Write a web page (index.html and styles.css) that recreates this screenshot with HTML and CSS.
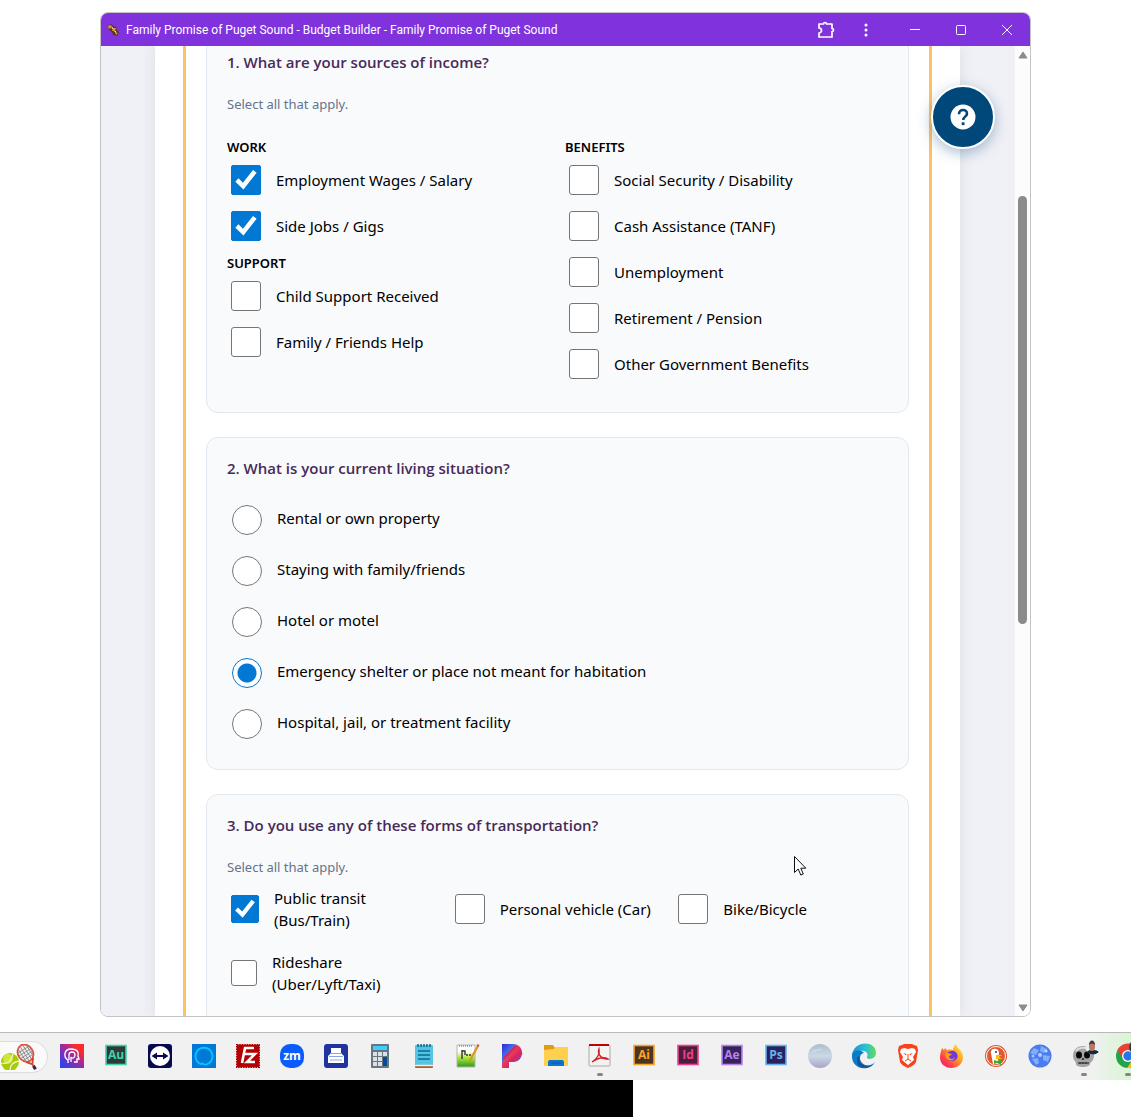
FILE: index.html
```html
<!DOCTYPE html>
<html lang="en">
<head>
    <meta charset="UTF-8">
    <meta name="viewport" content="width=device-width, initial-scale=1.0">
    <title>Family Promise of Puget Sound - Budget Builder</title>
    <link rel="stylesheet" href="styles.css">
</head>
<body>

    <div class="window">
        <header class="titlebar">
            <svg class="favicon" width="12" height="12" viewBox="0 0 12 12"><path d="M1 2 4 0l2 2 3 1 1 3 2 3-2 3-4-1-1-3-3-2z" fill="#5b3420"/><path d="M1 2l3-1 1 2-3 2zM6 4l3 0-1 3-3 0zM8 8l3 1-2 2z" fill="#d89b35"/><path d="M4 4l2-1 0 2zM7 7l2 0 0 2z" fill="#fff0b0"/></svg>
            <span class="window-title">Family Promise of Puget Sound - Budget Builder - Family Promise of Puget Sound</span>
            <button class="title-btn ext-btn" aria-label="Extensions">
                <svg width="18" height="18" viewBox="0 0 18 18" fill="none" stroke="#fff" stroke-width="1.700" stroke-linejoin="round"><path d="M2 3h4.500a1.500 1.500 0 0 1 3 0H15v4.500a1.500 1.500 0 0 1 0 3V16H2v-4a2.500 2.500 0 0 0 0-5z"/></svg>
            </button>
            <button class="title-btn menu-btn" aria-label="Menu">
                <svg width="4" height="14" viewBox="0 0 4 14" fill="#fff"><circle cx="2" cy="2" r="1.500"/><circle cx="2" cy="7" r="1.500"/><circle cx="2" cy="12" r="1.500"/></svg>
            </button>
            <button class="title-btn" aria-label="Minimize">
                <svg width="10" height="10" viewBox="0 0 10 10" stroke="#fff"><path d="M0 4.500h10"/></svg>
            </button>
            <button class="title-btn" aria-label="Maximize">
                <svg width="10" height="10" viewBox="0 0 10 10" stroke="#fff" fill="none"><rect x=".5" y=".5" width="9" height="9" rx="1"/></svg>
            </button>
            <button class="title-btn" aria-label="Close">
                <svg width="10" height="10" viewBox="0 0 10 10" stroke="#fff"><path d="M0 0l10 10M10 0L0 10"/></svg>
            </button>
        </header>

        <div class="viewport">
            <main class="page">
                <form class="form">

                    <!-- Income -->
                    <section class="card">
                        <h2>1. What are your sources of income?</h2>
                        <p class="hint">Select all that apply.</p>
                        <div class="two-col">
                            <div>
                                <h3>WORK</h3>
                                <label class="check"><input type="checkbox" checked> Employment Wages / Salary</label>
                                <label class="check"><input type="checkbox" checked> Side Jobs / Gigs</label>
                                <h3>SUPPORT</h3>
                                <label class="check"><input type="checkbox"> Child Support Received</label>
                                <label class="check"><input type="checkbox"> Family / Friends Help</label>
                            </div>
                            <div>
                                <h3>BENEFITS</h3>
                                <label class="check"><input type="checkbox"> Social Security / Disability</label>
                                <label class="check"><input type="checkbox"> Cash Assistance (TANF)</label>
                                <label class="check"><input type="checkbox"> Unemployment</label>
                                <label class="check"><input type="checkbox"> Retirement / Pension</label>
                                <label class="check"><input type="checkbox"> Other Government Benefits</label>
                            </div>
                        </div>
                    </section>

                    <!-- Living situation -->
                    <section class="card">
                        <h2>2. What is your current living situation?</h2>
                        <label class="radio"><input type="radio" name="living"> <span>Rental or own property</span></label>
                        <label class="radio"><input type="radio" name="living"> <span>Staying with family/friends</span></label>
                        <label class="radio"><input type="radio" name="living"> <span>Hotel or motel</span></label>
                        <label class="radio"><input type="radio" name="living" checked> <span>Emergency shelter or place not meant for habitation</span></label>
                        <label class="radio"><input type="radio" name="living"> <span>Hospital, jail, or treatment facility</span></label>
                    </section>

                    <!-- Transportation -->
                    <section class="card last">
                        <h2>3. Do you use any of these forms of transportation?</h2>
                        <p class="hint">Select all that apply.</p>
                        <div class="three-col">
                            <label class="check"><input type="checkbox" class="medium" checked> <span>Public transit<br>(Bus/Train)</span></label>
                            <label class="check"><input type="checkbox"> <span>Personal vehicle (Car)</span></label>
                            <label class="check"><input type="checkbox"> <span>Bike/Bicycle</span></label>
                            <label class="check"><input type="checkbox" class="small"> <span>Rideshare<br>(Uber/Lyft/Taxi)</span></label>
                        </div>
                    </section>

                </form>
            </main>

            <div class="scrollbar">
                <svg width="10" height="8" viewBox="0 0 10 8"><path d="M5 1 9 7H1z" fill="#8b8b8b" stroke="#8b8b8b" stroke-linejoin="round"/></svg>
                <div class="track"><div class="thumb"></div></div>
                <svg width="10" height="8" viewBox="0 0 10 8"><path d="M5 7 9 1H1z" fill="#8b8b8b" stroke="#8b8b8b" stroke-linejoin="round"/></svg>
            </div>
        </div>

        <button class="help" aria-label="Help">
            <svg width="26" height="26" viewBox="0 0 26 26"><circle cx="13" cy="13" r="12.500" fill="#fff"/><path d="M9 10.200C9 7.500 10.700 6 13 6s4 1.500 4 3.700c0 2.800-3.800 3.100-3.800 6.300" fill="none" stroke="#00477a" stroke-width="2.600"/><rect x="11.700" y="18.300" width="2.800" height="2.800" fill="#00477a"/></svg>
        </button>
    </div>

    <svg class="cursor" width="13" height="20" viewBox="0 0 13 20"><path d="M.5.5v16l3.700-3.500 2.600 6 2.500-1-2.500-5.800h5z" fill="#fff" stroke="#101018"/></svg>

    <footer class="taskbar">
        <button class="widget" aria-label="Tennis">
            <svg width="38" height="26" viewBox="0 0 38 26"><g transform="rotate(-32 26 10)"><ellipse cx="26" cy="9" rx="7.500" ry="9" fill="#eee" stroke="#e2523c" stroke-width="1.800"/><path d="M20 5h12M19 8h14M19 11h14M20 14h12M22 2v14M25 1v17M28 1v17M31 4v10" stroke="#777" stroke-width=".7"/><path d="M22 17l4 5 4-5M26 21v6" stroke="#d9432f" stroke-width="1.800" fill="none"/><path d="M26 24v4" stroke="#43263a" stroke-width="3"/></g><circle cx="10" cy="18" r="9" fill="#a9c90d"/><circle cx="8" cy="15" r="5" fill="#cfe63c"/><path d="M1 19c7 2 10-2 12-9M10 26c0-5 3-8 9-9" fill="none" stroke="#f2f7c4" stroke-width="1.300"/></svg>
        </button>

        <div class="apps">
            <button class="app" aria-label="Assistant">
                <svg viewBox="0 0 24 24"><defs><linearGradient id="g1" x1="0" y1="1" x2="1" y2="0"><stop offset="0" stop-color="#1746ff"/><stop offset=".55" stop-color="#a52a96"/><stop offset=".8" stop-color="#ff2a2a"/></linearGradient></defs><path d="M0 0h24v24H0z" fill="url(#g1)"/><path d="M8 19v-3C3 13 4 5 11 5c7 0 8 4 7 7l1 3h-2v3h-3" fill="none" stroke="#fff" stroke-width="1.400"/><path d="M9 16V11c0-4 6-4 6 0 0 3-3 4-4 2v5" fill="none" stroke="#fff" stroke-width="1.300"/></svg>
            </button>
            <button class="app" aria-label="Audition">
                <svg viewBox="0 0 24 24"><rect x="2" y="1.500" width="20" height="19" fill="#2b3b3b" stroke="#43d3a5" stroke-width="1.600"/><text x="12" y="15" class="adobe" fill="#43d3a5">Au</text></svg>
            </button>
            <button class="app" aria-label="TeamViewer">
                <svg viewBox="0 0 24 24"><rect width="24" height="24" rx="3" fill="#08094f"/><circle cx="12" cy="12" r="10" fill="#fff"/><path d="M3.500 12 9 8.500V11h6V8.500l5.500 3.500-5.500 3.500V13H9v2.500z" fill="#08094f"/></svg>
            </button>
            <button class="app" aria-label="Alexa">
                <svg viewBox="0 0 24 24"><path d="M0 0h24v24H0z" fill="#0078d7"/><path d="M10 20.500a8.500 8.500 0 1 1 4 0c-2 .3-3 .2-4-2" fill="none" stroke="#00caff" stroke-width="1.800"/></svg>
            </button>
            <button class="app" aria-label="FileZilla">
                <svg viewBox="0 0 24 24"><rect x=".7" y=".7" width="22.600" height="22.600" fill="#b30000" stroke="#b30000" stroke-width="1.400" stroke-dasharray="1.500 1"/><path d="M6 19 9 4h9M7.500 10H15M12 10h7l-8 8h8" fill="none" stroke="#fff" stroke-width="2.600"/></svg>
            </button>
            <button class="app" aria-label="Zoom">
                <svg viewBox="0 0 24 24"><rect width="24" height="24" rx="10" fill="#0b5cff"/><text x="12" y="15.500" class="adobe" fill="#fff">zm</text></svg>
            </button>
            <button class="app" aria-label="Scanner">
                <svg viewBox="0 0 24 24"><rect width="24" height="24" rx="3" fill="#20349f"/><path d="M7 4h10v5l3 3v7H4v-7l3-3z" fill="#fff"/><path d="M7 9.500h10M5 12.500h14M6 16h12" stroke="#8fa4e8"/></svg>
            </button>
            <button class="app" aria-label="Calculator">
                <svg viewBox="0 0 24 24"><rect x="3" width="18" height="24" rx="1" fill="#687582"/><path d="M5 2h14v4H5z" fill="#42cdf8"/><path d="M5 8h4v4H5zM10 8h4v4h-4zM15 8h4v4h-4zM5 13h4v4H5zM10 13h4v4h-4zM5 18h4v4H5zM10 18h4v4h-4z" fill="#dbe2e7"/><path d="M15 13h4v9h-4z" fill="#064b91"/></svg>
            </button>
            <button class="app" aria-label="Notepad">
                <svg viewBox="0 0 24 24"><rect x="3" y="19" width="18" height="5" rx="1" fill="#b75a13"/><rect x="3" y="1" width="18" height="20" rx="1" fill="#55c3e3"/><path d="M3 21.500h18" stroke="#eee" stroke-width="1.500"/><path d="M6 0v3M9 0v3M12 0v3M15 0v3M18 0v3M6 7h12M6 11h12M6 15h12" stroke="#08698c" stroke-width="1.500"/></svg>
            </button>
            <button class="app" aria-label="Notepad++">
                <svg viewBox="0 0 24 24"><defs><linearGradient id="g2" x2="0" y2="1"><stop offset=".3" stop-color="#fff"/><stop offset=".55" stop-color="#b3ed3d"/><stop offset="1" stop-color="#2b9a17"/></linearGradient></defs><path d="M1 1h18v22H1z" fill="url(#g2)" stroke="#b4b4b4"/><path d="M3 2h14" stroke="#555" stroke-dasharray="1 1"/><path d="M6 6v9M6 7h3v4M10 11h2M13 11h2" stroke="#333" stroke-width="1.400" fill="none"/><path d="M13 18 22 2" stroke="#dc9821" stroke-width="2.200"/><path d="M21.500 2.500l1-2" stroke="#d55241" stroke-width="2.200"/></svg>
            </button>
            <button class="app" aria-label="Pandora">
                <svg viewBox="0 0 24 24"><defs><linearGradient id="g3" x2="1" y2="1"><stop offset="0" stop-color="#3524d4"/><stop offset=".35" stop-color="#3c78ef"/><stop offset=".45" stop-color="#f3354e"/><stop offset=".6" stop-color="#d6296c"/><stop offset="1" stop-color="#4a4ef0"/></linearGradient></defs><path d="M2 0h11c12 0 12 18 0 18H9v6H2z" fill="url(#g3)"/><path d="M3 15 16 2M9 17l13-8" stroke="#d92557" stroke-width="2"/></svg>
            </button>
            <button class="app" aria-label="File Explorer">
                <svg viewBox="0 0 24 24"><path d="M0 1h9l2 3v3H0z" fill="#df9b13"/><path d="M0 6 10 5l1-2h13v19H0z" fill="#ffd04f"/><path d="M4 22v-4q0-2 2-2h12q2 0 2 2v4z" fill="#0876d1"/><path d="M7 19h10" stroke="#0b549e"/></svg>
            </button>
            <button class="app running" aria-label="Acrobat">
                <svg viewBox="0 0 24 24"><rect x="1" y="1" width="21" height="21" rx="1" fill="#f2f2f2" stroke="#aaa"/><path d="M1 1h20" stroke="#c30000" stroke-width="2"/><path d="M4 18c6-4 8-8 7-13-2 5 3 11 9 10-5-3-10-1-16 3z" fill="none" stroke="#d51c22" stroke-width="1.400"/></svg>
            </button>
            <button class="app" aria-label="Illustrator">
                <svg viewBox="0 0 24 24"><rect x="2" y="1.500" width="20" height="19" fill="#4b351f" stroke="#fba428" stroke-width="1.600"/><text x="12" y="15" class="adobe" fill="#fba428">Ai</text></svg>
            </button>
            <button class="app" aria-label="InDesign">
                <svg viewBox="0 0 24 24"><rect x="2" y="1.500" width="20" height="19" fill="#4a2039" stroke="#ef3d95" stroke-width="1.600"/><text x="12" y="15" class="adobe" fill="#ef3d95">Id</text></svg>
            </button>
            <button class="app" aria-label="After Effects">
                <svg viewBox="0 0 24 24"><rect x="2" y="1.500" width="20" height="19" fill="#332459" stroke="#ba80ee" stroke-width="1.600"/><text x="12" y="15" class="adobe" fill="#ba80ee">Ae</text></svg>
            </button>
            <button class="app" aria-label="Photoshop">
                <svg viewBox="0 0 24 24"><rect x="2" y="1.500" width="20" height="19" fill="#28235e" stroke="#67b1ed" stroke-width="1.600"/><text x="12" y="15" class="adobe" fill="#67b1ed">Ps</text></svg>
            </button>
            <button class="app" aria-label="Sphere">
                <svg viewBox="0 0 24 24"><defs><linearGradient id="g4" x2="0" y2="1"><stop offset="0" stop-color="#aebdce"/><stop offset=".5" stop-color="#cbd9e6"/><stop offset="1" stop-color="#a6a5c8"/></linearGradient></defs><circle cx="12" cy="12" r="12" fill="url(#g4)"/><path d="M5 8c3-3 6-1 9-3" stroke="#dbe5ee" stroke-width="2" fill="none" opacity=".5"/></svg>
            </button>
            <button class="app" aria-label="Edge">
                <svg viewBox="0 0 24 24"><defs><linearGradient id="g5"><stop offset="0" stop-color="#168ed9"/><stop offset=".6" stop-color="#2fc3d0"/><stop offset="1" stop-color="#65dc4d"/></linearGradient></defs><path d="M0 12C1-4 24-4 24 9c0 7-10 7-9 4 2-4-2-7-7-6-4 0-7 2-8 5z" fill="url(#g5)"/><path d="M0 11c1-5 9-6 12-2-5 0-6 9 1 12 4 1 7 0 10-3C16 29-1 25 0 11z" fill="#0c7bc7"/><path d="M8 12c-3 7 5 13 14 8-7 7-18 4-17-4 0-3 2-4 3-4z" fill="#11539d"/></svg>
            </button>
            <button class="app" aria-label="Brave">
                <svg viewBox="0 0 24 24"><path d="m6 1 2-1h8l2 1 3 1 1 4-2 12q-1 3-8 6-7-3-8-6L2 6l1-4z" fill="#fb421b"/><path d="m5 5 3-1 4 1 4-1 3 1 1 3-3 5 1 3-6 5-6-5 1-3-3-5z" fill="#fff"/><path d="m7 9 3.500 1-.5 1.500zM17 9l-3.500 1 .5 1.500z" fill="#fb421b"/><path d="M12 10v5l-3 2M12 15l3 2" stroke="#fb421b" fill="none"/></svg>
            </button>
            <button class="app" aria-label="Firefox">
                <svg viewBox="0 0 24 24"><defs><linearGradient id="g6" x1="1" x2="0" y2="1"><stop offset="0" stop-color="#fff44f"/><stop offset=".45" stop-color="#ff9420"/><stop offset=".75" stop-color="#ff3750"/><stop offset="1" stop-color="#e81c8a"/></linearGradient></defs><path d="M2 4l2 2 1-2 2 2c3-1 5 0 6 0 0-3 2-5 3-6 0 4 7 6 7 13 0 14-22 15-23 1 0-4 1-7 2-10z" fill="url(#g6)"/><path d="M7 9c2-1 4-3 7-2 6 3 4 10-2 10-3 0-6-2-6-5l3-1z" fill="#7139dc"/><path d="M5 10c3-2 4 0 7 0-1 2-3 1-3 3 1 3 5 2 6 0-1 5-9 5-10-3z" fill="#ff9a1f"/></svg>
            </button>
            <button class="app" aria-label="DuckDuckGo">
                <svg viewBox="0 0 24 24"><circle cx="12" cy="12" r="11" fill="#de5833"/><circle cx="12" cy="12" r="9.500" fill="none" stroke="#fff"/><path d="M9 20 7 9c-1-5 8-6 8 0l-1 6 1 5z" fill="#fff"/><path d="M12 11h6l-3 2 3 2h-6z" fill="#fdbd19"/><path d="m10 16 3 1 4-1v5l-4-2-3 1z" fill="#45a928"/><circle cx="12" cy="8" r="1" fill="#263b76"/></svg>
            </button>
            <button class="app" aria-label="Globe">
                <svg viewBox="0 0 24 24"><circle cx="12" cy="12" r="11.500" fill="#4a7cf0"/><path d="M2 9 6 4l5 2-3 5zM13 2l6 3-3 4-4-2zM15 11l7 1-2 6-5-2zM4 15l6-1 1 5-3 2z" fill="#83adfa"/><circle cx="12" cy="11" r="2" fill="#b5cffc"/><circle cx="18" cy="7" r="1.500" fill="#c3d9ff"/><circle cx="5" cy="12" r="1.500" fill="#a5c5ff"/></svg>
            </button>
            <button class="app running" aria-label="Skull">
                <svg viewBox="0 0 24 24"><defs><clipPath id="face"><circle cx="21" cy="3" r="7.500"/></clipPath></defs><path d="M1 12C1 5 6 2 11 2c6 0 11 4 11 10 0 5-4 6-4 8 0 4-14 4-14 0 0-3-3-4-3-8z" fill="#a4a4a4"/><path d="M4 7c3-4 10-4 13-1" stroke="#ddd" stroke-width="2" fill="none"/><ellipse cx="7" cy="11" rx="3" ry="3.500" fill="#080808"/><ellipse cx="15" cy="11" rx="3" ry="3.500" fill="#080808"/><path d="M6 19h11M8 18v2M11 18v2M14 18v2M10 16l1-2 1 2" stroke="#222" fill="none"/><g clip-path="url(#face)"><path d="M13-5h16v16H13z" fill="#e8f0f3"/><path d="M14 11c0-5 4-5 7-5s7 1 7 5z" fill="#17283d"/><ellipse cx="20" cy="2.500" rx="3" ry="4.500" fill="#b97863"/><path d="M17 1c0-6 6-6 6 0-2-2-4-2-6 0z" fill="#51342d"/></g></svg>
            </button>
            <button class="app running" aria-label="Chrome">
                <svg viewBox="0 0 24 24"><circle cx="12" cy="12" r="12" fill="#22a449"/><path d="M1.500 6C7-3 18-2 22.500 6H12L6.500 14z" fill="#ea4335"/><path d="M22.500 6C27 15 20 25 11 24l6-9-2-9z" fill="#fbc116"/><circle cx="12" cy="12" r="6" fill="#fff"/><circle cx="12" cy="12" r="4.700" fill="#2675e8"/><circle cx="20" cy="3" r="7" fill="#343c43"/></svg>
            </button>
        </div>
    </footer>

    <div class="blackout"></div>

</body>
</html>
```

FILE: styles.css
```css
* {
    box-sizing: border-box;
}
body {
    font-family: "Noto Sans", "Liberation Sans", sans-serif;
    font-size: 15px;
    margin: 0;
    height: 100vh;
    display: flex;
    flex-direction: column;
    background: white;
    color: black;
    overflow: hidden;
}
button {
    font: inherit;
    border: none;
    background: none;
    padding: 0;
    cursor: pointer;
}
svg {
    display: block;
    flex: none;
}

/* Browser window */
.window {
    position: relative;
    flex: 1;
    min-height: 0;
    margin: 12px 100px 15px;
    display: flex;
    flex-direction: column;
    border: 1px solid #c3c3c3;
    border-radius: 8px;
    overflow: hidden;
}
.titlebar {
    flex: none;
    height: 33px;
    display: flex;
    align-items: center;
    background: #8033dd;
    color: white;
}
.favicon {
    margin: 0 7px 0 6px;
}
.window-title {
    flex: 1;
    min-width: 0;
    white-space: nowrap;
    overflow: hidden;
    font-family: Roboto, sans-serif;
    font-size: 12px;
}
.title-btn {
    width: 46px;
    height: 33px;
    display: flex;
    align-items: center;
    justify-content: center;
}
.ext-btn {
    width: 28px;
}
.menu-btn {
    width: 52px;
}
.viewport {
    flex: 1;
    min-height: 0;
    display: flex;
    background: #f0f1f6;
    overflow: hidden;
}
.page {
    flex: 1;
    margin: 0 55px 0 54px;
    padding: 0 28px;
    background: white;
    box-shadow: 0 0 14px rgba(0, 60, 60, 0.1);
}
.form {
    min-height: 100%;
    padding: 0 20px;
    border-left: 3px solid #ffc166;
    border-right: 3px solid #ffc166;
}

/* Question cards */
.card {
    padding: 20px;
    margin-bottom: 24px;
    background: #f9fafc;
    border: 1px solid #e1e8ef;
    border-radius: 12px;
}
.card:first-child {
    margin-top: -15px; /* page is scrolled past the top of this card */
}
.last {
    min-height: 300px;
    margin-bottom: 0;
}
h2 {
    margin: 0 0 16px;
    font-family: "Open Sans", sans-serif;
    font-size: 15px;
    line-height: 20px;
    font-weight: 600;
    color: #472a59;
}
.hint {
    margin: 22px 0 5px;
    font-size: 13px;
    line-height: 20px;
    color: #64748b;
}
h3 {
    margin: 0;
    padding-top: 4px;
    font-size: 13px;
    line-height: 20px;
    font-weight: 600;
}
.two-col {
    display: grid;
    grid-template-columns: 1fr 1fr;
    column-gap: 15px;
    padding: 14px 0 5px;
}
.three-col {
    display: grid;
    grid-template-columns: repeat(3, 1fr);
    gap: 10px;
}
.check {
    display: flex;
    align-items: center;
    gap: 15px;
    min-height: 46px;
    padding-left: 4px;
    line-height: 22px;
}
.three-col .check {
    min-height: 54px;
    white-space: nowrap;
}
.radio {
    display: flex;
    align-items: center;
    gap: 15px;
    height: 51px;
    padding-left: 5px;
    line-height: 22px;
}
.radio span {
    padding-bottom: 4px;
}
.check input, .radio input {
    appearance: none;
    flex: none;
    width: 30px;
    height: 30px;
    margin: 0;
    background: white;
    border: 1px solid #767676;
    border-radius: 3px;
}
.check .medium {
    width: 28px;
    height: 28px;
}
.check .small {
    width: 26px;
    height: 26px;
}
.check input:checked {
    background: #0078d4;
    border-color: #0078d4;
    border-radius: 2px;
}
.check input:checked::before {
    content: "";
    display: block;
    width: 100%;
    height: 100%;
    background: white;
    clip-path: polygon(12% 56%, 23% 44%, 39% 60%, 75% 14%, 88% 24%, 41% 84%);
}
.radio input {
    border-radius: 50%;
}
.radio input:checked {
    border-color: #0078d4;
    background: radial-gradient(circle, #0078d4 9px, white 10px);
}

.scrollbar {
    width: 15px;
    display: flex;
    flex-direction: column;
    align-items: center;
    padding: 5px 0 4px;
    background: #fcfcfc;
}
.track {
    flex: 1;
    padding-top: 137px;
}
.thumb {
    width: 9px;
    height: 53%;
    border-radius: 5px;
    background: #8b8b8b;
}

.help {
    position: absolute;
    top: 72px;
    right: 35px;
    width: 64px;
    height: 64px;
    display: flex;
    align-items: center;
    justify-content: center;
    background: #00477a;
    border: 2px solid white;
    border-radius: 50%;
    box-shadow: 0 4px 14px rgba(0, 71, 122, 0.35);
}
.cursor {
    position: absolute;
    left: 794px;
    top: 856px;
}

/* Taskbar */
.taskbar {
    flex: none;
    height: 48px;
    display: flex;
    align-items: center;
    border-top: 1px solid #b9b9b9;
    background: linear-gradient(to right, #f1f1f1 1090px, #d9f5d4 1131px);
    overflow: hidden;
}
.widget {
    flex: none;
    width: 48px;
    height: 32px;
    margin-right: 2px;
    background: #fafafa;
    border: 1px solid #ddd;
    border-left: none;
    border-radius: 0 16px 16px 0;
}
.apps {
    display: flex;
    flex: none;
}
.app {
    position: relative;
    width: 44px;
    height: 46px;
    padding-bottom: 2px;
    display: flex;
    align-items: center;
    justify-content: center;
}
.app svg {
    width: 24px;
    height: 24px;
    overflow: visible;
}
.running::after {
    content: "";
    position: absolute;
    bottom: 4px;
    left: 19px;
    width: 6px;
    height: 3px;
    border-radius: 2px;
    background: #858585;
}
.adobe {
    font-family: "Open Sans", sans-serif;
    font-size: 12px;
    font-weight: 700;
    text-anchor: middle;
}
.blackout {
    flex: none;
    width: 56%;
    height: 37px;
    background: black;
}
```
